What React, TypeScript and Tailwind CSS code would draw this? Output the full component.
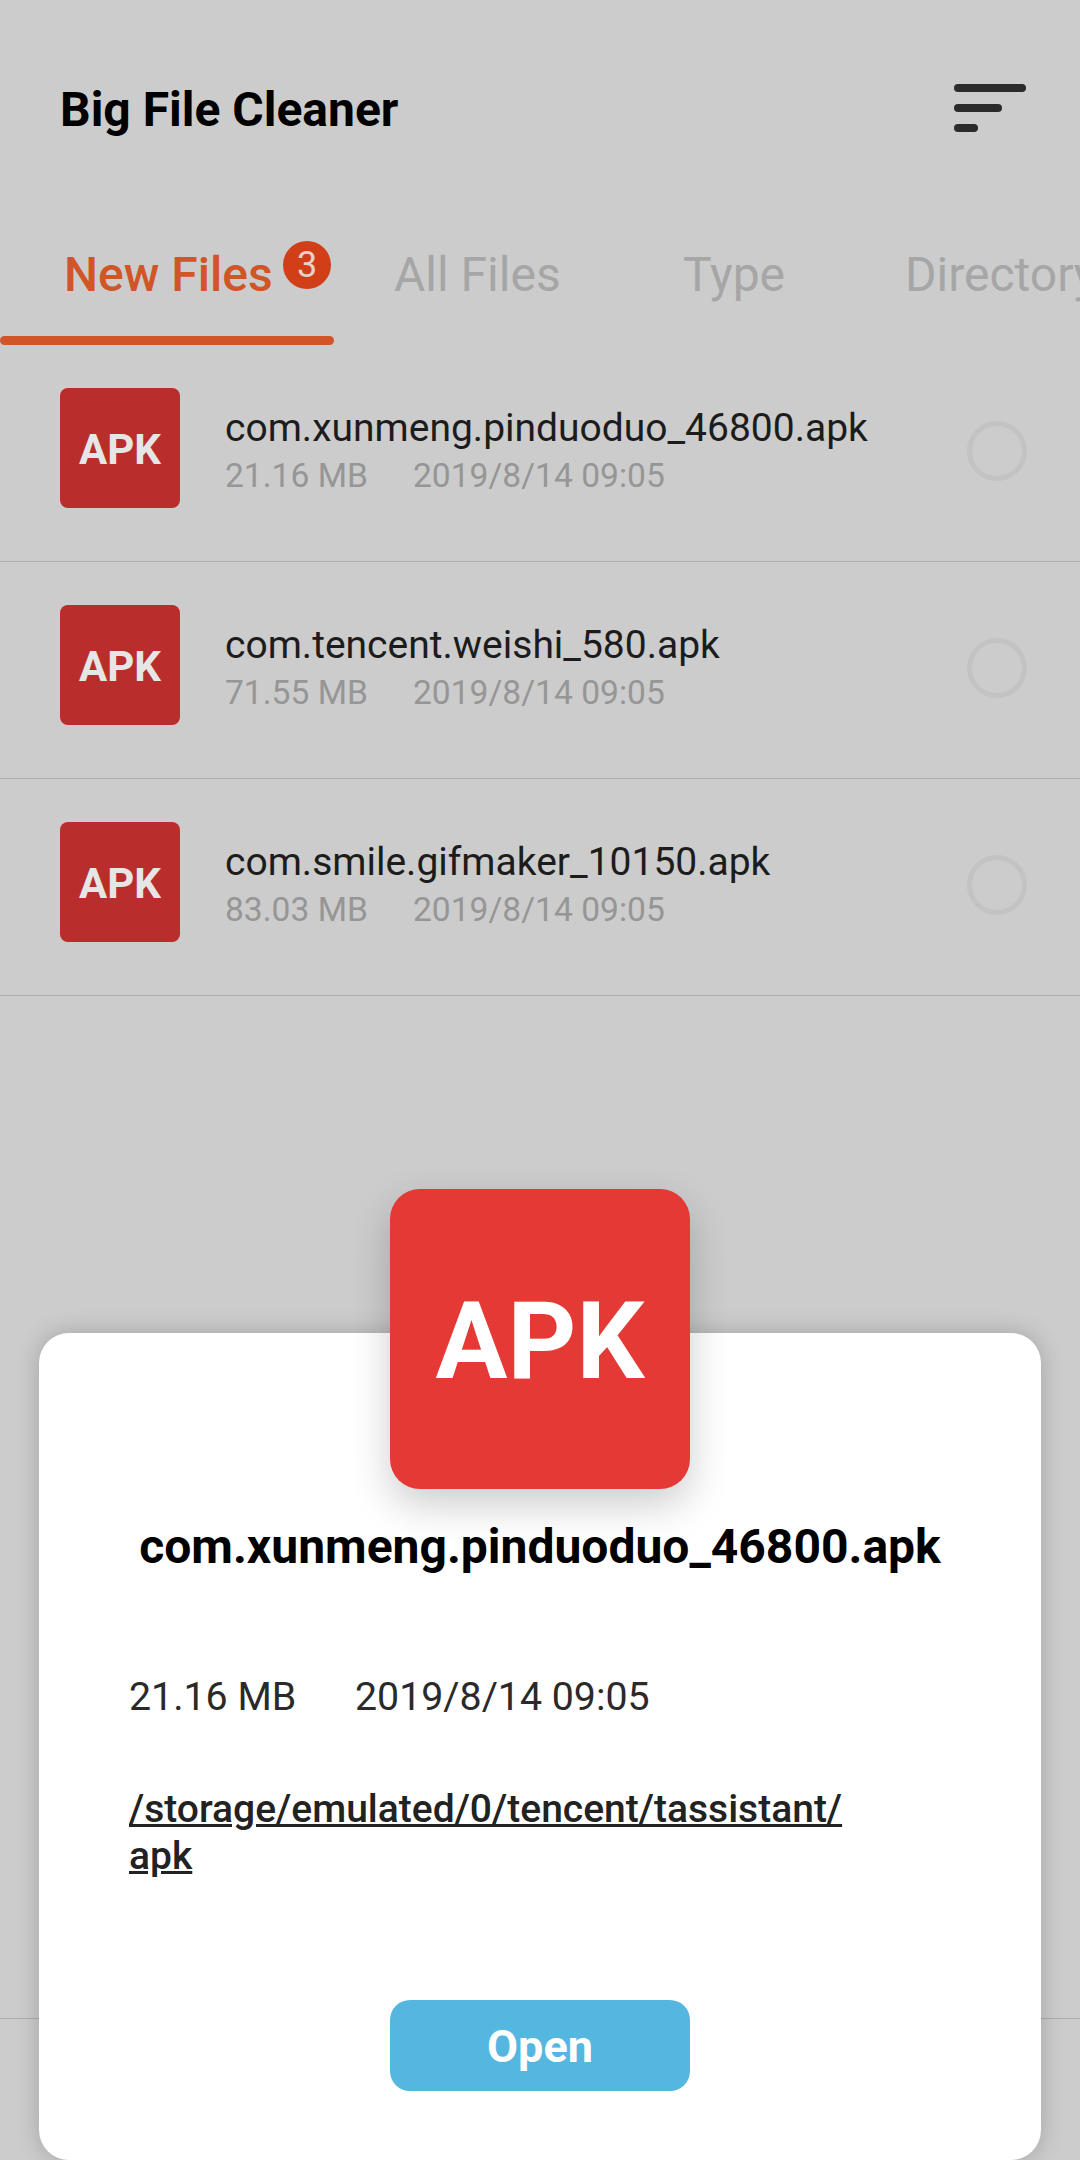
const rows = [
  { name: "com.xunmeng.pinduoduo_46800.apk", size: "21.16 MB" },
  { name: "com.tencent.weishi_580.apk", size: "71.55 MB" },
  { name: "com.smile.gifmaker_10150.apk", size: "83.03 MB" },
];

function Row({ name, size }: { name: string; size: string }) {
  return (
    <div className="flex h-[217px] items-start border-b border-[#aeaeae] pl-[60px] pr-[53px] pt-[43px]">
      <div className="flex h-[120px] w-[120px] shrink-0 items-center justify-center rounded-[8px] bg-[#b92e2c] pt-[3px] text-[42px] font-bold text-[#e6e6e6]">
        APK
      </div>
      <div className="ml-[45px] flex-1 pt-[18px]">
        <div className="text-[39px] leading-[44px] text-[#1c1c1c]">{name}</div>
        <div className="mt-[4px] flex text-[33.6px] leading-[44px] text-[#969696]">
          <span className="w-[188px]">{size}</span>
          <span>2019/8/14 09:05</span>
        </div>
      </div>
      <div className="mt-[33px] h-[60px] w-[60px] rounded-full border-[5px] border-[#c3c3c3]" />
    </div>
  );
}

export default function App() {
  return (
    <div className="relative h-[2160px] w-[1080px] overflow-hidden bg-[#cccccc] font-['Roboto',sans-serif]">
      <header className="flex h-[218px] items-start justify-between pl-[60px] pr-[54px] pt-[80px]">
        <h1 className="text-[48px] font-bold leading-[60px] text-black">Big File Cleaner</h1>
        <svg width="72" height="48" viewBox="0 0 72 48" className="mt-[4px]" fill="#2b2b2b">
          <rect x="0" y="0" width="72" height="8" rx="4" />
          <rect x="0" y="20" width="48" height="8" rx="4" />
          <rect x="0" y="40" width="24" height="8" rx="4" />
        </svg>
      </header>

      <nav className="relative h-[127px] overflow-hidden">
        <div className="flex h-[118px] whitespace-nowrap pt-[30px] text-[48px] leading-[54px] text-[#a6a6a6]">
          <div className="relative w-[334px] shrink-0 pl-[64px] font-medium text-[#d05527]">
            New Files
            <span className="absolute left-[283px] top-[-7px] flex h-[48px] w-[48px] items-center justify-center rounded-full bg-[#d13f18] text-[36px] font-normal leading-none text-[#e8d0c8]">
              3
            </span>
          </div>
          <div className="w-[349px] shrink-0 pl-[60px]">All Files</div>
          <div className="w-[222px] shrink-0">Type</div>
          <div className="shrink-0">Directory</div>
        </div>
        <div className="h-[9px] w-[334px] rounded-full bg-[#d05527]" />
      </nav>

      <main>
        {rows.map((r) => (
          <Row key={r.name} {...r} />
        ))}
      </main>

      <div className="absolute left-0 right-0 top-[2018px] h-px bg-[#aeaeae]" />

      <section className="absolute left-[39px] top-[1333px] h-[827px] w-[1002px] rounded-[30px] bg-white shadow-[0_0_24px_rgba(0,0,0,0.2)]">
        <div className="absolute left-[351px] top-[-144px] flex h-[300px] w-[300px] items-center justify-center rounded-[30px] bg-[#e53935] pt-[6px] text-[107px] font-bold text-white shadow-[0_16px_40px_rgba(0,0,0,0.2)]">
          APK
        </div>
        <div className="flex h-full flex-col px-[90px] pt-[185px]">
          <h2 className="text-center text-[48px] font-bold leading-[58px] text-black">
            com.xunmeng.pinduoduo_46800.apk
          </h2>
          <div className="mt-[96px] flex text-[39.3px] leading-[50px] text-[#2a2a2a]">
            <span className="w-[226px]">21.16 MB</span>
            <span>2019/8/14 09:05</span>
          </div>
          <p className="mt-[64px] w-[730px] text-[39px] font-medium leading-[47px] text-[#222222] underline">
            /storage/emulated/0/tencent/tassistant/
            <br />
            apk
          </p>
          <button className="mx-auto mt-[120px] flex h-[91px] w-[300px] items-center justify-center rounded-[20px] bg-[#55b6df] pt-[2px] text-[45px] font-bold text-white">
            Open
          </button>
        </div>
      </section>
    </div>
  );
}
